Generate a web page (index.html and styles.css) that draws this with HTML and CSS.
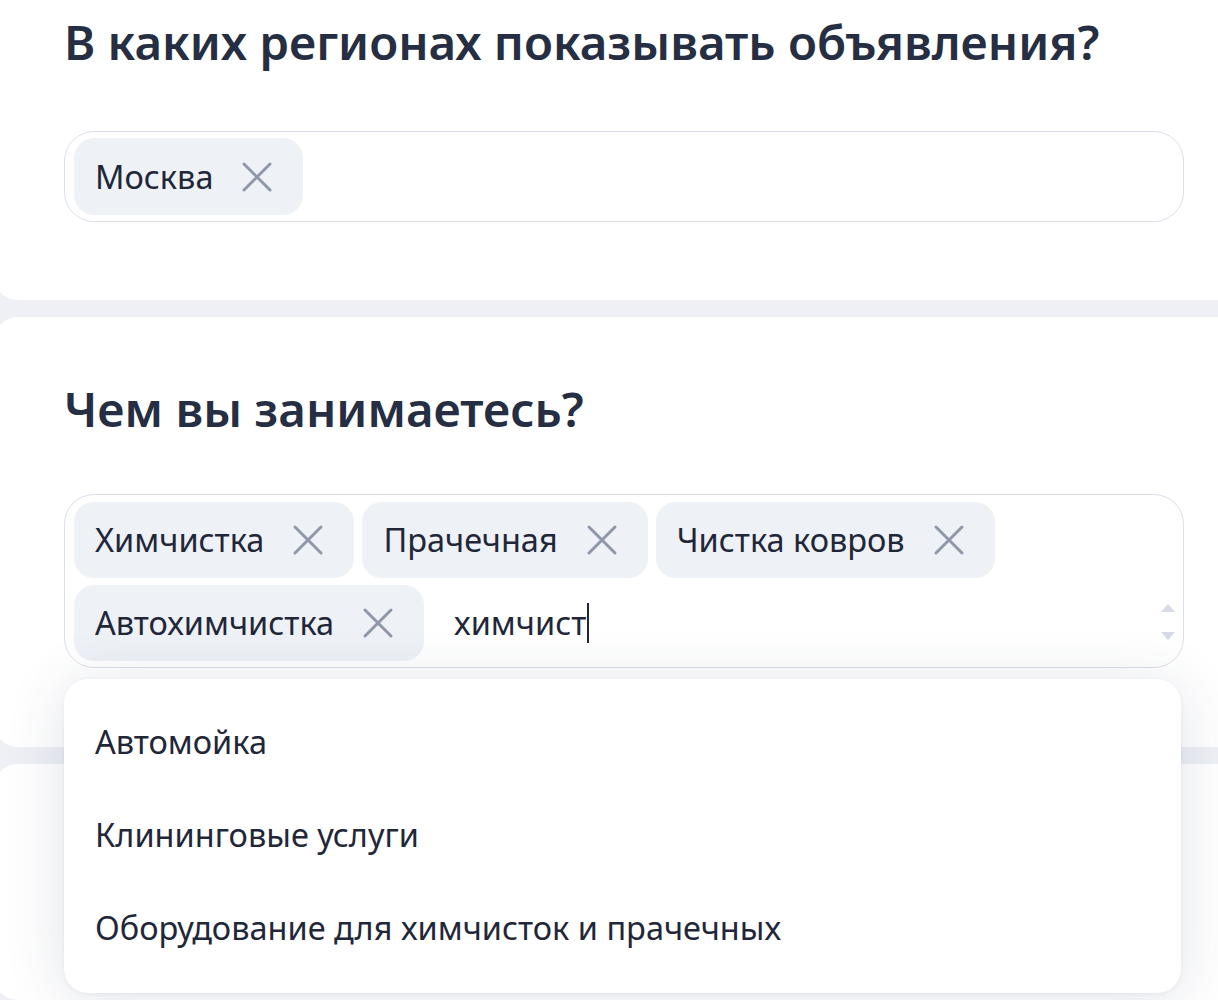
FILE: index.html
```html
<!DOCTYPE html>
<html lang="ru">
<head>
<meta charset="utf-8">
<title>Регионы и сфера деятельности</title>
<link rel="stylesheet" href="styles.css">
</head>
<body>
<main class="page">
  <section class="card card-regions">
    <h2 class="card-title">В каких регионах показывать объявления?</h2>
    <div class="field">
      <span class="chip">
        <span class="chip-label">Москва</span>
        <svg class="chip-x" viewBox="0 0 32 32" aria-hidden="true"><path d="M3 3 L29 29 M29 3 L3 29"/></svg>
      </span>
    </div>
  </section>

  <section class="card card-business">
    <h2 class="card-title title-business">Чем вы занимаетесь?</h2>
    <div class="field-wrap">
      <div class="field field-multi">
        <span class="chip">
          <span class="chip-label">Химчистка</span>
          <svg class="chip-x" viewBox="0 0 32 32" aria-hidden="true"><path d="M3 3 L29 29 M29 3 L3 29"/></svg>
        </span>
        <span class="chip">
          <span class="chip-label">Прачечная</span>
          <svg class="chip-x" viewBox="0 0 32 32" aria-hidden="true"><path d="M3 3 L29 29 M29 3 L3 29"/></svg>
        </span>
        <span class="chip">
          <span class="chip-label">Чистка ковров</span>
          <svg class="chip-x" viewBox="0 0 32 32" aria-hidden="true"><path d="M3 3 L29 29 M29 3 L3 29"/></svg>
        </span>
        <span class="chip">
          <span class="chip-label">Автохимчистка</span>
          <svg class="chip-x" viewBox="0 0 32 32" aria-hidden="true"><path d="M3 3 L29 29 M29 3 L3 29"/></svg>
        </span>
        <span class="query">химчист<span class="caret"></span></span>
        <span class="scroller" aria-hidden="true">
          <span class="arrow arrow-up"></span>
          <span class="arrow arrow-down"></span>
        </span>
      </div>
      <ul class="dropdown">
        <li class="option">Автомойка</li>
        <li class="option">Клининговые услуги</li>
        <li class="option">Оборудование для химчисток и прачечных</li>
      </ul>
    </div>
  </section>

  <section class="card card-next"></section>
</main>
</body>
</html>
```

FILE: styles.css
```css
* {
  box-sizing: border-box;
}

html, body {
  margin: 0;
  padding: 0;
}

body {
  background: #eef0f5;
  font-family: "Noto Sans", "Open Sans", sans-serif;
  color: #1f2739;
  overflow: hidden;
  height: 1000px;
}

.page {
  display: flex;
  flex-direction: column;
  gap: 17px;
  margin: -24px -40px 0 -6px;
}

.card {
  background: #ffffff;
  border-radius: 24px;
  padding: 0 0 0 70px;
}

.card-regions {
  height: 324px;
  padding-top: 36px;
}

.card-business {
  height: 430px;
  padding-top: 62px;
}

.card-next {
  height: 236px;
}

.card-title {
  margin: 0;
  font-size: 47.5px;
  font-weight: 600;
  line-height: 60px;
  color: #252e42;
  letter-spacing: 0;
}

.card-regions .field {
  margin-top: 59px;
}

.title-business {
  margin-bottom: 55px;
}

.field-wrap {
  position: relative;
  width: 1120px;
}

.field {
  width: 1120px;
  border: 1.5px solid #dcdfe9;
  border-radius: 30px;
  padding: 6px 9px;
  display: flex;
  flex-wrap: wrap;
  gap: 7px 8px;
  align-items: center;
  background: #ffffff;
}

.field-multi {
  position: relative;
  padding: 7px 9px 6px;
  padding-right: 60px;
}

.chip {
  display: inline-flex;
  align-items: center;
  height: 76px;
  padding: 0 30px 0 21px;
  background: #eef1f6;
  border-radius: 20px;
  gap: 28px;
}

.card-regions .chip {
  height: 77px;
}

.chip-label {
  font-size: 32.5px;
  line-height: 40px;
  color: #1f2739;
}

.chip-x {
  width: 32px;
  height: 32px;
  flex: none;
}

.chip-x path {
  stroke: #8f97aa;
  stroke-width: 3;
  stroke-linecap: round;
  fill: none;
}

.query {
  display: inline-flex;
  align-items: center;
  margin-left: 22px;
  font-size: 32.5px;
  line-height: 40px;
  color: #1f2739;
}

.caret {
  display: inline-block;
  width: 2px;
  height: 40px;
  background: #1f2739;
  margin-left: 1px;
}

.scroller {
  position: absolute;
  right: 8px;
  top: 109px;
  display: flex;
  flex-direction: column;
  gap: 20px;
}

.arrow {
  width: 0;
  height: 0;
  border-left: 7.5px solid transparent;
  border-right: 7.5px solid transparent;
}

.arrow-up {
  border-bottom: 8px solid #d6dae4;
}

.arrow-down {
  border-top: 8px solid #d6dae4;
}

.dropdown {
  position: absolute;
  left: 0;
  top: 185px;
  width: 1117px;
  margin: 0;
  padding: 16px 0 19px;
  list-style: none;
  background: #ffffff;
  border-radius: 24px;
  box-shadow: 0 6px 60px rgba(40, 55, 100, 0.14), 0 1px 4px rgba(40, 55, 100, 0.06);
  z-index: 2;
}

.option {
  height: 93px;
  display: flex;
  align-items: center;
  padding-left: 31px;
  font-size: 32.5px;
  color: #1f2739;
}
```
